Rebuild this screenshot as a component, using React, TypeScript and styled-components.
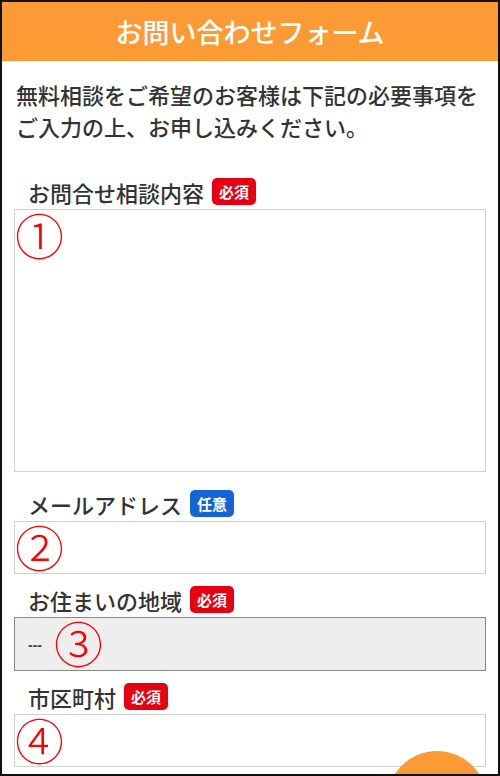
import React from "react";
import styled, { createGlobalStyle } from "styled-components";

const GlobalStyle = createGlobalStyle`
  html, body {
    margin: 0;
    padding: 0;
    background: #fff;
  }
  body {
    font-family: "Noto Sans CJK JP", "Noto Sans", sans-serif;
    color: #333;
  }
`;

const Frame = styled.div`
  position: relative;
  box-sizing: border-box;
  width: 500px;
  height: 776px;
  border: 2px solid #111;
  overflow: hidden;
  background: #fff;
`;

const Header = styled.h1`
  margin: 0;
  height: 59px;
  display: flex;
  align-items: center;
  justify-content: center;
  background: #fc9a36;
  color: #fff;
  font-size: 27px;
  font-weight: 500;
`;

const Intro = styled.p`
  margin: 17px 0 0;
  padding: 0 14px;
  font-size: 22px;
  line-height: 32px;
  font-weight: 500;
  color: #333;
`;

const Form = styled.form`
  padding: 0 12px;
  margin-top: 35px;
`;

const Group = styled.div<{ $gap?: number }>`
  margin-top: ${(p) => p.$gap ?? 11}px;
  &:first-child {
    margin-top: 0;
  }
`;

const LabelRow = styled.div`
  display: flex;
  align-items: flex-end;
  gap: 8px;
  height: 29px;
  padding-left: 14px;
  margin-bottom: 3px;
`;

const LabelText = styled.span`
  font-size: 22px;
  line-height: 27px;
  font-weight: 500;
  color: #333;
`;

const Badge = styled.span<{ $optional?: boolean }>`
  display: inline-flex;
  align-items: center;
  justify-content: center;
  height: 27px;
  margin-bottom: 1px;
  padding: 0 7px;
  border-radius: 5px;
  background: ${(p) => (p.$optional ? "#1463d8" : "#e60012")};
  color: #fff;
  font-size: 15px;
  font-weight: 700;
`;

const Field = styled.div<{ $height: number; $select?: boolean }>`
  box-sizing: border-box;
  height: ${(p) => p.$height}px;
  display: flex;
  align-items: flex-start;
  gap: 12px;
  padding: ${(p) => (p.$select ? "1px 0 0 13px" : "1px 0 0 0")};
  border: 1px solid ${(p) => (p.$select ? "#888" : "#d0d0d0")};
  background: ${(p) => (p.$select ? "#eee" : "#fff")};
`;

const Placeholder = styled.span`
  align-self: center;
  font-size: 14px;
  font-weight: 700;
  color: #444;
  font-family: "Liberation Sans", sans-serif;
`;

const Mark = styled.span`
  color: #ff0000;
  font-size: 49px;
  line-height: 46px;
  font-weight: 300;
`;

const FloatButton = styled.div`
  position: absolute;
  left: 385px;
  top: 749px;
  width: 100px;
  height: 100px;
  border-radius: 50%;
  background: #fc9a36;
`;

const fields = [
  { label: "お問合せ相談内容", optional: false, height: 263, mark: "①", gap: 0 },
  { label: "メールアドレス", optional: true, height: 53, mark: "②", gap: 17 },
  { label: "お住まいの地域", optional: false, height: 54, mark: "③", select: true },
  { label: "市区町村", optional: false, height: 53, mark: "④" },
  { label: "電話番号", optional: false, height: 53, mark: "" },
];

export default function App() {
  return (
    <>
      <GlobalStyle />
      <Frame>
        <Header>お問い合わせフォーム</Header>
        <Intro>
          無料相談をご希望のお客様は下記の必要事項を
          <br />
          ご入力の上、お申し込みください。
        </Intro>
        <Form>
          {fields.map((f) => (
            <Group key={f.label} $gap={f.gap}>
              <LabelRow>
                <LabelText>{f.label}</LabelText>
                <Badge $optional={f.optional}>{f.optional ? "任意" : "必須"}</Badge>
              </LabelRow>
              <Field $height={f.height} $select={f.select}>
                {f.select && <Placeholder>---</Placeholder>}
                {f.mark && <Mark>{f.mark}</Mark>}
              </Field>
            </Group>
          ))}
        </Form>
        <FloatButton />
      </Frame>
    </>
  );
}
